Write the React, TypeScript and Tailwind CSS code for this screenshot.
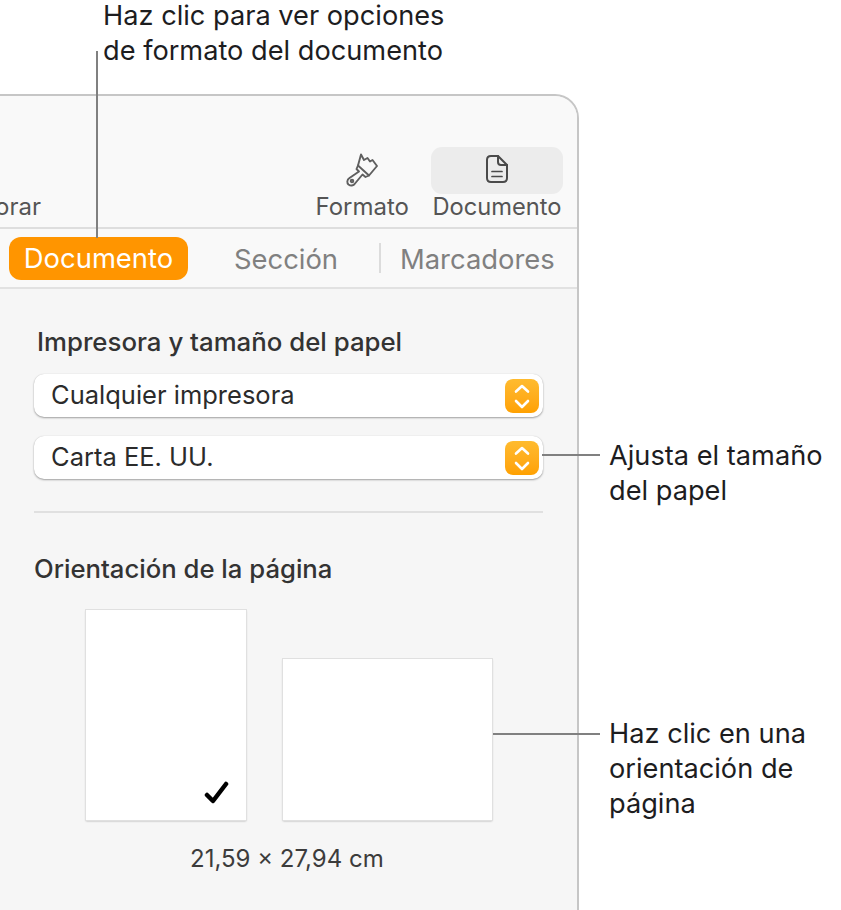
import * as React from 'react';

const font = { fontFamily: 'Inter, "Liberation Sans", sans-serif' };

function BrushIcon() {
  return (
    <svg width="32" height="34" viewBox="0 0 32 34" fill="none" stroke="#5f5f5f" strokeWidth="1.9" strokeLinejoin="round" strokeLinecap="round">
      <path d="M15 1.5 L18 7 L21.5 5 L24 8.5 L26.5 7 L31 13 L23 22.5 L12 12.5 Z" />
      <path d="M12 12.5 L10.5 16 L13 18.5 L3.5 25 C0.5 27 1 30 2.5 31.5 C4.5 33 7.5 33 9 30.5 L16.5 21.5 L19.5 24 L23 22.5" />
      <circle cx="6" cy="28" r="1.3" />
    </svg>
  );
}

function DocIcon() {
  return (
    <svg width="24" height="30" viewBox="0 0 24 30" fill="none" stroke="#4a4a4a" strokeWidth="2" strokeLinejoin="round" strokeLinecap="round">
      <path d="M6 2 H13 L22 11 V24 C22 27 20.5 28 18 28 H6 C3.5 28 2 27 2 24 V6 C2 3 3.5 2 6 2 Z" />
      <path d="M13 2 V8 C13 10 14 11 16 11 H22" />
      <path d="M7 17.5 H17 M7 22.5 H17" strokeWidth="1.7" />
    </svg>
  );
}

function Stepper() {
  return (
    <div className="w-[34px] h-[34px] rounded-[8px] bg-gradient-to-b from-[#ffbb2e] to-[#ffa100]">
      <svg width="34" height="34" viewBox="0 0 34 34" fill="none" stroke="#ffffff" strokeWidth="2.6" strokeLinecap="round" strokeLinejoin="round">
        <path d="M11 12.5 L17 7 L23 12.5" />
        <path d="M11 22 L17 28 L23 22" />
      </svg>
    </div>
  );
}

function PopUp({ label, className }: { label: string; className: string }) {
  return (
    <div className={`h-[43px] rounded-[10px] bg-white shadow-[0_1px_2px_rgba(0,0,0,0.35),0_0_1px_rgba(0,0,0,0.15)] flex items-center justify-between pl-[17px] pr-[4px] text-[25.5px] text-[#2b2b2b] ${className}`}>
      <span>{label}</span>
      <Stepper />
    </div>
  );
}

function Callout({ children, className }: { children: React.ReactNode; className: string }) {
  return <div className={`absolute text-[27.2px] leading-[35px] text-[#1d1d1f] whitespace-nowrap ${className}`}>{children}</div>;
}

export default function App() {
  return (
    <div className="relative w-[841px] h-[910px] overflow-hidden bg-white" style={font}>
      <div className="absolute left-0 top-[94px] w-[579px] h-[816px] flex flex-col bg-[#f6f6f6] border-t-2 border-r-2 border-[#c6c6c6] rounded-tr-[24px] overflow-hidden">
        {/* toolbar */}
        <div className="h-[133px] shrink-0 bg-[#f9f9f9] border-b-2 border-[#dedede] flex items-end justify-between pr-[14px] pb-[5px]">
          <span className="text-[24px] leading-[30px] text-[#555555] -ml-[5px]">orar</span>
          <div className="flex items-end gap-[22px]">
            <div className="flex flex-col items-center">
              <BrushIcon />
              <span className="mt-[5px] text-[24px] leading-[30px] text-[#555555]">Formato</span>
            </div>
            <div className="flex flex-col items-center w-[132px]">
              <div className="w-[132px] h-[47px] rounded-[11px] bg-[#ececec] flex items-center justify-center pb-[4px]">
                <DocIcon />
              </div>
              <span className="mt-[-2px] text-[23.7px] leading-[30px] text-[#555555]">Documento</span>
            </div>
          </div>
        </div>

        {/* tabs */}
        <div className="h-[60px] shrink-0 bg-[#f9f9f9] border-b-2 border-[#e2e2e2] flex items-center pl-[9px] text-[27.4px]">
          <div className="w-[179px] h-[43px] pt-[2px] rounded-[12px] bg-[#ff9500] text-white flex items-center justify-center">Documento</div>
          <div className="w-[191px] pl-[5px] pt-[3px] text-center text-[#808080]">Sección</div>
          <div className="w-[2px] h-[30px] bg-[#dcdcdc]" />
          <div className="ml-[19px] pt-[3px] text-[#808080]">Marcadores</div>
        </div>

        {/* document options */}
        <div className="pt-[38px] pl-[34px] pr-[34px]">
          <div className="pl-[3px] text-[25.8px] leading-[30px] font-medium text-[#333333]">Impresora y tamaño del papel</div>
          <PopUp label="Cualquier impresora" className="mt-[17px]" />
          <PopUp label="Carta EE. UU." className="mt-[19px]" />
          <div className="mt-[32px] h-[2px] bg-[#e0e0e0]" />
          <div className="mt-[41px] text-[25.7px] leading-[30px] font-medium text-[#333333]">Orientación de la página</div>
          <div className="mt-[26px] ml-[52px] flex items-end gap-[37px]">
            <div className="relative w-[160px] h-[210px] bg-white shadow-[0_1px_2px_rgba(0,0,0,0.35)] outline outline-1 outline-[#e0e0e0]">
              <svg className="absolute left-[118px] top-[171px]" width="26" height="24" viewBox="0 0 26 24" fill="none" stroke="#000000" strokeWidth="4.5" strokeLinecap="round" strokeLinejoin="round">
                <path d="M3 14 L9 20 L22 3" />
              </svg>
            </div>
            <div className="w-[209px] h-[161px] bg-white shadow-[0_1px_2px_rgba(0,0,0,0.35)] outline outline-1 outline-[#e0e0e0]" />
          </div>
          <div className="mt-[24px] ml-[156px] text-[24px] leading-[30px] text-[#3c3c3c]">21,59 × 27,94 cm</div>
        </div>
      </div>

      {/* callouts */}
      <Callout className="left-[103px] top-[-2px]">Haz clic para ver opciones<br />de formato del documento</Callout>
      <div className="absolute left-[96px] top-[51px] w-[2px] h-[187px] bg-[#808080]" />
      <div className="absolute left-[542px] top-[454px] w-[58px] h-[2px] bg-[#808080]" />
      <Callout className="left-[609px] top-[438px]">Ajusta el tamaño<br />del papel</Callout>
      <div className="absolute left-[493px] top-[733px] w-[107px] h-[2px] bg-[#808080]" />
      <Callout className="left-[609px] top-[716px]">Haz clic en una<br />orientación de<br />página</Callout>
    </div>
  );
}
